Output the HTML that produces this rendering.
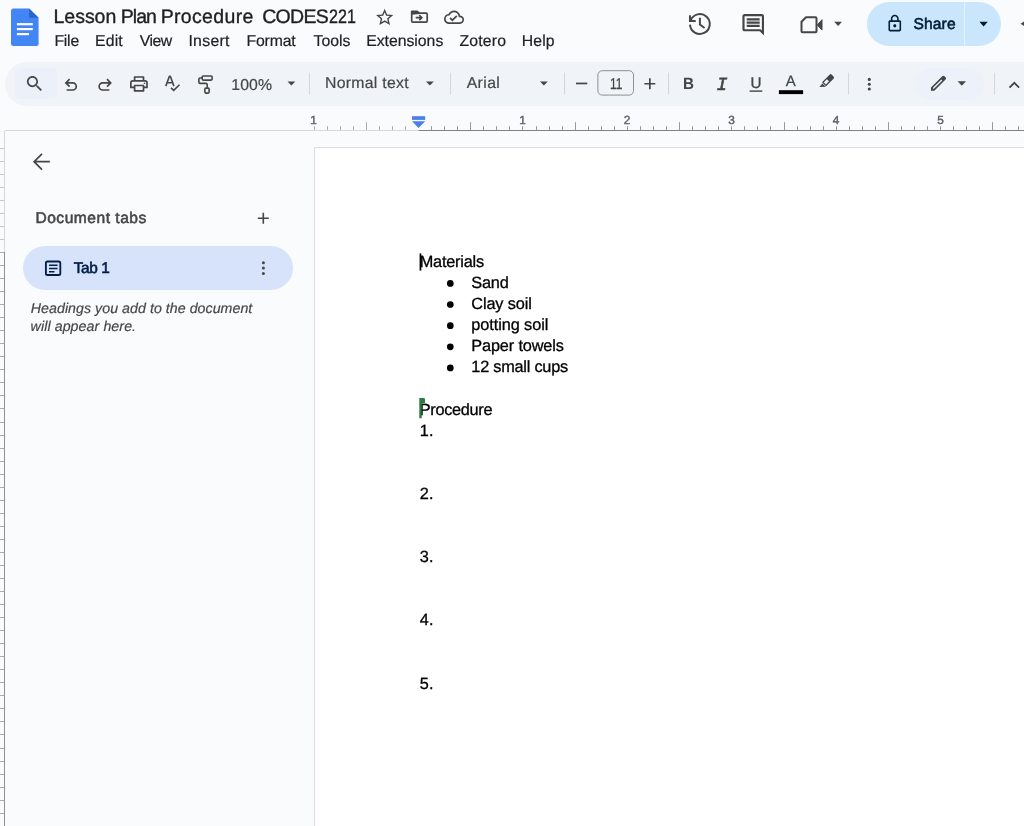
<!DOCTYPE html>
<html lang="en">
<head>
<meta charset="utf-8">
<title>Lesson Plan Procedure CODES221 - Google Docs</title>
<style>
html,body{margin:0;padding:0;}
body{width:1024px;height:826px;overflow:hidden;background:#f9fbfd;position:relative;font-family:"Liberation Sans",sans-serif;color:#444746;}
.abs{position:absolute;}
.t{position:absolute;white-space:nowrap;line-height:1;text-rendering:geometricPrecision;}
#toolbar{left:5px;top:62px;width:1040px;height:43.5px;border-radius:22px;background:#f0f4f9;}
#searchhl{left:15px;top:68px;width:42px;height:31px;background:#ecf1f9;border-radius:4px;}
#share{left:867px;top:2.100px;width:134.200px;height:43.700px;border-radius:22px;background:#c9e6fc;}
#sharesep{left:964px;top:2.100px;width:1px;height:43.700px;background:#e6f2fd;}
#editpill{left:915px;top:68px;width:69px;height:32px;border-radius:16px;background:#edf2fa;}
#page{left:314px;top:147px;width:720px;height:700px;background:#fff;border:1px solid #dadce0;box-sizing:border-box;}
#tabpill{left:23px;top:246px;width:270px;height:44px;border-radius:22px;background:#d7e3fa;}
</style>
</head>
<body>
<div id="toolbar" class="abs"></div>
<div id="searchhl" class="abs"></div>
<div id="share" class="abs"></div>
<div id="sharesep" class="abs"></div>
<div id="editpill" class="abs"></div>
<div id="page" class="abs"></div>
<div id="tabpill" class="abs"></div>
<div id="txt" class="abs" style="left:0;top:0;width:1024px;height:826px;will-change:transform;">
<!--TEXT-->
<div id="title" class="abs" style="left:0;top:0"><span class="t" style="left:53.47px;top:8.00px;font-size:19.5px;color:#1f1f1f;letter-spacing:-0.011px;-webkit-text-stroke:0.35px #1f1f1f;">Lesson</span> <span class="t" style="left:120.67px;top:8.00px;font-size:19.5px;color:#1f1f1f;letter-spacing:-0.926px;-webkit-text-stroke:0.35px #1f1f1f;">Plan</span> <span class="t" style="left:160.67px;top:8.00px;font-size:19.5px;color:#1f1f1f;letter-spacing:0.341px;-webkit-text-stroke:0.35px #1f1f1f;">Procedure</span> <span class="t" style="left:262.19px;top:8.00px;font-size:19.5px;color:#1f1f1f;letter-spacing:-0.667px;-webkit-text-stroke:0.35px #1f1f1f;">CODES</span><span class="t" style="left:328.68px;top:8.00px;font-size:19.5px;color:#1f1f1f;transform:scaleX(0.8271);transform-origin:0 0;-webkit-text-stroke:0.35px #1f1f1f;">221</span></div>
<div class="t" style="left:54.40px;top:34.00px;font-size:15.8px;color:#202124;letter-spacing:-0.214px;-webkit-text-stroke:0.2px #202124;">File</div>
<div class="t" style="left:95.10px;top:34.00px;font-size:15.8px;color:#202124;letter-spacing:0.146px;-webkit-text-stroke:0.2px #202124;">Edit</div>
<div class="t" style="left:139.70px;top:34.00px;font-size:15.8px;color:#202124;letter-spacing:-0.497px;-webkit-text-stroke:0.2px #202124;">View</div>
<div class="t" style="left:188.39px;top:34.00px;font-size:15.8px;color:#202124;letter-spacing:0.311px;-webkit-text-stroke:0.2px #202124;">Insert</div>
<div class="t" style="left:246.40px;top:34.00px;font-size:15.8px;color:#202124;letter-spacing:-0.132px;-webkit-text-stroke:0.2px #202124;">Format</div>
<div class="t" style="left:313.59px;top:34.00px;font-size:15.8px;color:#202124;letter-spacing:-0.022px;-webkit-text-stroke:0.2px #202124;">Tools</div>
<div class="t" style="left:366.20px;top:34.00px;font-size:15.8px;color:#202124;letter-spacing:-0.020px;-webkit-text-stroke:0.2px #202124;">Extensions</div>
<div class="t" style="left:459.56px;top:34.00px;font-size:15.8px;color:#202124;letter-spacing:0.157px;-webkit-text-stroke:0.2px #202124;">Zotero</div>
<div class="t" style="left:521.70px;top:34.00px;font-size:15.8px;color:#202124;letter-spacing:0.148px;-webkit-text-stroke:0.2px #202124;">Help</div>
<div class="t" style="left:913.45px;top:17.00px;font-size:15.6px;color:#001d35;letter-spacing:0.141px;-webkit-text-stroke:0.55px #001d35;">Share</div>
<div class="t" style="left:231.36px;top:78.00px;font-size:15.8px;color:#444746;letter-spacing:0.089px;-webkit-text-stroke:0.2px #444746;">100%</div>
<div class="t" style="left:325.00px;top:76.00px;font-size:15.8px;color:#444746;letter-spacing:0.292px;-webkit-text-stroke:0.2px #444746;">Normal text</div>
<div class="t" style="left:466.64px;top:76.00px;font-size:15.8px;color:#444746;letter-spacing:0.411px;-webkit-text-stroke:0.2px #444746;">Arial</div>
<div class="t" style="left:609.51px;top:77.00px;font-size:15.8px;color:#444746;transform:scaleX(0.7553);transform-origin:0 0;-webkit-text-stroke:0.3px #444746;">11</div>
<div class="t" style="left:35.45px;top:211.00px;font-size:15.6px;color:#444746;letter-spacing:0.499px;-webkit-text-stroke:0.55px #444746;">Document tabs</div>
<div class="t" style="left:73.82px;top:261.00px;font-size:15.4px;color:#041e49;letter-spacing:-0.427px;-webkit-text-stroke:0.6px #041e49;">Tab 1</div>
<div class="t" style="left:30.82px;top:302.00px;font-size:14.2px;color:#444746;letter-spacing:0.045px;font-style:italic;-webkit-text-stroke:0.2px #444746;">Headings you add to the document</div>
<div class="t" style="left:30.61px;top:320.00px;font-size:14.2px;color:#444746;letter-spacing:0.084px;font-style:italic;-webkit-text-stroke:0.2px #444746;">will appear here.</div>
<div class="t" style="left:419.70px;top:254.00px;font-size:16.3px;color:#000;letter-spacing:-0.207px;-webkit-text-stroke:0.3px #000;">Materials</div>
<div class="t" style="left:471.30px;top:275.00px;font-size:16.3px;color:#000;letter-spacing:-0.201px;-webkit-text-stroke:0.3px #000;">Sand</div>
<div class="t" style="left:471.30px;top:296.00px;font-size:16.3px;color:#000;letter-spacing:-0.120px;-webkit-text-stroke:0.3px #000;">Clay soil</div>
<div class="t" style="left:471.30px;top:317.00px;font-size:16.3px;color:#000;letter-spacing:-0.075px;-webkit-text-stroke:0.3px #000;">potting soil</div>
<div class="t" style="left:471.30px;top:338.00px;font-size:16.3px;color:#000;letter-spacing:-0.141px;-webkit-text-stroke:0.3px #000;">Paper towels</div>
<div class="t" style="left:471.30px;top:359.00px;font-size:16.3px;color:#000;letter-spacing:-0.226px;-webkit-text-stroke:0.3px #000;">12 small cups</div>
<div class="t" style="left:419.70px;top:402.00px;font-size:16.3px;color:#000;letter-spacing:-0.280px;-webkit-text-stroke:0.3px #000;">Procedure</div>
<div class="t" style="left:419.70px;top:423.00px;font-size:16.3px;color:#000;letter-spacing:0.200px;-webkit-text-stroke:0.3px #000;">1.</div>
<div class="t" style="left:419.70px;top:486.00px;font-size:16.3px;color:#000;letter-spacing:0.200px;-webkit-text-stroke:0.3px #000;">2.</div>
<div class="t" style="left:419.70px;top:549.00px;font-size:16.3px;color:#000;letter-spacing:0.200px;-webkit-text-stroke:0.3px #000;">3.</div>
<div class="t" style="left:419.70px;top:612.00px;font-size:16.3px;color:#000;letter-spacing:0.200px;-webkit-text-stroke:0.3px #000;">4.</div>
<div class="t" style="left:419.70px;top:676.00px;font-size:16.3px;color:#000;letter-spacing:0.200px;-webkit-text-stroke:0.3px #000;">5.</div>
<div class="t" style="left:310.30px;top:115.00px;font-size:11.8px;color:#5f6368;-webkit-text-stroke:0.45px #5f6368;">1</div>
<div class="t" style="left:519.20px;top:115.00px;font-size:11.8px;color:#5f6368;-webkit-text-stroke:0.45px #5f6368;">1</div>
<div class="t" style="left:623.63px;top:115.00px;font-size:11.8px;color:#5f6368;-webkit-text-stroke:0.45px #5f6368;">2</div>
<div class="t" style="left:728.13px;top:115.00px;font-size:11.8px;color:#5f6368;-webkit-text-stroke:0.45px #5f6368;">3</div>
<div class="t" style="left:832.63px;top:115.00px;font-size:11.8px;color:#5f6368;-webkit-text-stroke:0.45px #5f6368;">4</div>
<div class="t" style="left:937.14px;top:115.00px;font-size:11.8px;color:#5f6368;-webkit-text-stroke:0.45px #5f6368;">5</div>
<div class="t" style="left:682.69px;top:76.00px;font-size:16.2px;color:#444746;font-weight:700;transform:scaleX(0.9402);transform-origin:0 0;-webkit-text-stroke:0.01px #444746;">B</div>
<div class="t" style="left:716.53px;top:77.00px;font-size:18.4px;color:#444746;font-style:italic;font-family:'Liberation Mono',monospace;-webkit-text-stroke:0.6px #444746;">I</div>
<div class="t" style="left:750.58px;top:76.00px;font-size:15.2px;color:#444746;-webkit-text-stroke:0.35px #444746;">U</div>
<div class="t" style="left:785.81px;top:74.00px;font-size:15.0px;color:#444746;-webkit-text-stroke:0.25px #444746;">A</div>
<!--/TEXT-->
</div>
<!--SVG-->
<svg class="abs" style="left:0;top:0" width="1024" height="826" viewBox="0 0 1024 826">
<!-- docs logo -->
<g id="logo">
<path d="M13.5 8.4H29.1L38.6 17.7V43.4a2.5 2.5 0 0 1-2.5 2.5H13.5a2.5 2.5 0 0 1-2.5-2.5V10.9a2.5 2.5 0 0 1 2.500-2.500z" fill="#4285f4"/>
<path d="M29.1 8.400L38.600 17.700H29.100z" fill="#2b63d0"/>
<rect x="16.9" y="23.1" width="15.9" height="2.2" fill="#fff"/>
<rect x="16.9" y="28" width="15.9" height="2.2" fill="#fff"/>
<rect x="16.9" y="33" width="12" height="2.200" fill="#fff"/>
</g>
<!-- title icons -->
<g id="star" fill="#444746" transform="translate(374.300,6.950) scale(0.865)"><path d="M22 9.240l-7.190-.620L12 2 9.190 8.630 2 9.240l5.460 4.730L5.820 21 12 17.270 18.180 21l-1.630-7.030L22 9.240zM12 15.400l-3.760 2.270 1-4.280-3.320-2.880 4.380-.380L12 6.100l1.710 4.040 4.380.38-3.320 2.880 1 4.280L12 15.400z"/></g>
<g id="folder" fill="none" stroke="#444746" stroke-width="1.7" stroke-linejoin="round">
<rect x="411.700" y="13.100" width="15.500" height="9" rx="1.200"/>
<path d="M411.700 14V11.300H417.300L419.300 13.100z" fill="#444746"/>
<path d="M415.700 17.650h5.600M419.300 15.150l2.500 2.500-2.500 2.500" stroke-width="1.700" stroke-linejoin="miter"/>
</g>
<g id="cloud" fill="#444746" transform="translate(444,7.200) scale(0.835)"><path d="M19.350 10.040C18.670 6.590 15.640 4 12 4 9.110 4 6.600 5.640 5.350 8.040 2.340 8.360 0 10.910 0 14c0 3.310 2.690 6 6 6h13c2.760 0 5-2.240 5-5 0-2.640-2.050-4.780-4.650-4.960zM19 18H6c-2.210 0-4-1.790-4-4 0-2.050 1.530-3.760 3.560-3.970l1.070-.11.500-.95C8.080 7.140 9.940 6 12 6c2.620 0 4.880 1.860 5.390 4.430l.3 1.500 1.530.11c1.560.1 2.780 1.410 2.780 2.960 0 1.650-1.350 3-3 3zm-9-3.820l-2.090-2.090L6.500 13.500 10 17l6.010-6.010-1.410-1.410z"/></g>
<!-- right header icons -->
<g id="history" fill="none" stroke="#444746" stroke-width="1.95"><path d="M690 24.600A9.900 9.900 0 1 0 690.600 20.600"/><path d="M689.950 15.300V20.950H695.700"/><path d="M699.900 17.700V24.600L704.600 28" stroke-linejoin="miter"/></g>
<g id="comment" fill="#444746" transform="translate(740.250,11.850) scale(1.080)"><path d="M21.990 4c0-1.100-.89-2-1.990-2H4c-1.100 0-2 .900-2 2v12c0 1.100.9 2 2 2h14l4 4-.01-18zM20 4v13.170L18.830 16H4V4h16zM6 12h12v2H6zm0-3h12v2H6zm0-3h12v2H6z"/></g>
<g id="video" fill="none" stroke="#444746" stroke-width="2" stroke-linejoin="round">
<path d="M806.000 17.300h9.500a1 1 0 0 1 1 1v13a1 1 0 0 1-1 1h-13a1 1 0 0 1-1-1v-9.500z"/>
<path d="M817.300 24.900l4.700-5.200v10.400z" fill="#444746" stroke-width="1"/>
</g>
<path d="M834.200 21.800h7.800l-3.900 4.200z" fill="#444746"/>
<!-- share -->
<g id="lock" fill="#001d35" transform="translate(885.300,14.000) scale(0.790)"><path d="M18 8h-1V6c0-2.760-2.240-5-5-5S7 3.240 7 6v2H6c-1.100 0-2 .9-2 2v10c0 1.100.9 2 2 2h12c1.100 0 2-.9 2-2V10c0-1.100-.9-2-2-2zM9 6c0-1.660 1.340-3 3-3s3 1.340 3 3v2H9V6zm9 14H6V10h12v10zm-6-3c1.100 0 2-.9 2-2s-.9-2-2-2-2 .9-2 2 .9 2 2 2z"/></g>
<path d="M979.400 21.800h8.400l-4.200 4.800z" fill="#001d35"/>
<path d="M1024 21.600l-3.400 2.200 3.400 2.200z" fill="#444746"/>
<!--TOOLBAR-->
<g fill="#444746" transform="translate(24.3,73.4) scale(0.858)"><path d="M15.500 14h-.790l-.280-.270C15.410 12.590 16 11.110 16 9.500 16 5.910 13.090 3 9.500 3S3 5.910 3 9.500 5.910 16 9.500 16c1.610 0 3.090-.590 4.230-1.570l.270.280v.790l5 4.990L20.490 19l-4.990-5zm-6 0C7.010 14 5 11.990 5 9.500S7.010 5 9.500 5 14 7.010 14 9.500 11.990 14 9.500 14z"/></g>
<g fill="none" stroke="#444746" stroke-width="1.7" stroke-linejoin="miter"><path d="M66.300 82.900H72.700a3.550 3.550 0 0 1 0 7.100H66.600M69.600 79.200L65.900 82.900L69.600 86.600"/><path d="M110.300 82.900H102.700a3.550 3.550 0 0 0 0 7.100H109.400M107 79.200L110.700 82.900L107 86.600"/></g>
<g fill="none" stroke="#444746" stroke-width="1.7" stroke-linejoin="round"><path d="M134.600 80.300V77H143.500V80.300"/><path d="M134.600 87.400H130.850V82.800a2 2 0 0 1 2-2H145a2 2 0 0 1 2 2V87.400H143.500"/><rect x="134.600" y="85.500" width="8.900" height="5.400"/></g><circle cx="144.500" cy="83.300" r="0.800" fill="#444746"/>
<g fill="none" stroke="#444746" stroke-width="1.600"><path d="M165.800 86.100L169.400 76.300H170.300L173.900 86.100M167.200 82.700H172.500" stroke-linejoin="bevel"/><path d="M171 87.800L173.700 90.400L179.500 84.700"/></g>
<g fill="none" stroke="#444746" stroke-width="1.600" stroke-linejoin="round"><rect x="202.200" y="76" width="9.900" height="4.100" rx="1"/><path d="M202.200 78H200a1.100 1.100 0 0 0-1.100 1.100V82.300a1.100 1.100 0 0 0 1.100 1.100H206.100a1.100 1.100 0 0 1 1.100 1.100V87.800"/><rect x="204.900" y="88.100" width="4.200" height="5" rx="1"/></g>
<path d="M287.5 81.600h7.800l-3.900 3.900z" fill="#444746"/>
<path d="M426 81.600h7.800l-3.900 3.900z" fill="#444746"/>
<path d="M540 81.600h7.800l-3.900 3.900z" fill="#444746"/>
<rect x="309" y="72.700" width="1" height="21.800" fill="#d3d6da"/>
<rect x="450" y="72.700" width="1" height="21.800" fill="#d3d6da"/>
<rect x="564" y="72.700" width="1" height="21.800" fill="#d3d6da"/>
<rect x="668" y="72.700" width="1" height="21.800" fill="#d3d6da"/>
<rect x="848" y="72.700" width="1" height="21.800" fill="#d3d6da"/>
<rect x="994" y="72.700" width="1" height="21.800" fill="#d3d6da"/>
<rect x="576" y="82.600" width="11.300" height="1.700" fill="#444746"/>
<rect x="597.900" y="70.700" width="35.600" height="24.400" rx="4.300" fill="none" stroke="#8c9196" stroke-width="1"/>
<path d="M644.400 82.900h10.900v1.700h-10.900zM649 78.300h1.700v10.900h-1.700z" fill="#444746"/>
<rect x="749.600" y="90.400" width="12.700" height="1.400" fill="#444746"/>
<rect x="778.900" y="90.200" width="24.200" height="3.900" fill="#000"/>
<g transform="translate(828.300,79.900) rotate(45)" fill="#444746"><path fill-rule="evenodd" d="M-2.850 -4.550a1.600 1.600 0 0 1 1.600-1.600h2.500a1.600 1.600 0 0 1 1.600 1.600V5.350a0.800 0.800 0 0 1-0.800 0.800h-4.100a0.800 0.800 0 0 1-0.800-0.800zM-1.450 0.500V4.900H1.450V0.500z"/></g><path d="M819.400 87.100L825.900 86.700L822.300 83.600z" fill="#444746"/>
<circle cx="869.300" cy="79.4" r="1.550" fill="#444746"/>
<circle cx="869.300" cy="84.2" r="1.550" fill="#444746"/>
<circle cx="869.300" cy="89" r="1.550" fill="#444746"/>
<g transform="translate(938,83.800) rotate(45)" fill="#444746"><path fill-rule="evenodd" d="M-2.350 -8.350a1.600 1.600 0 0 1 1.600-1.600h1.500a1.600 1.600 0 0 1 1.600 1.600V7.600L0 9.950L-2.350 7.600zM-0.650 -5.450H0.650V6.400L0 7.050L-0.650 6.400z"/></g>
<path d="M957.600 81.300h8.400l-4.200 4.500z" fill="#444746"/>
<path d="M1009.500 87.700L1014.300 82.800L1019.100 87.700" fill="none" stroke="#444746" stroke-width="1.800"/>
<!--/TOOLBAR-->
<!--RULER-->
<rect x="5" y="130" width="414" height="1" fill="#d5d7da"/>
<rect x="418.600" y="130" width="606" height="1" fill="#808386"/>
<rect x="314" y="126.2" width="1" height="3.8" fill="#a9acaf"/>
<rect x="327" y="126.2" width="1" height="3.8" fill="#a9acaf"/>
<rect x="340" y="126.2" width="1" height="3.8" fill="#a9acaf"/>
<rect x="353" y="126.2" width="1" height="3.8" fill="#a9acaf"/>
<rect x="366" y="122.2" width="1" height="7.8" fill="#a9acaf"/>
<rect x="379" y="126.2" width="1" height="3.8" fill="#a9acaf"/>
<rect x="392" y="126.2" width="1" height="3.8" fill="#a9acaf"/>
<rect x="405" y="126.2" width="1" height="3.8" fill="#a9acaf"/>
<rect x="431" y="126.2" width="1" height="3.8" fill="#96999c"/>
<rect x="444" y="126.2" width="1" height="3.8" fill="#96999c"/>
<rect x="457" y="126.2" width="1" height="3.8" fill="#96999c"/>
<rect x="470" y="122.2" width="1" height="7.8" fill="#96999c"/>
<rect x="483" y="126.2" width="1" height="3.8" fill="#96999c"/>
<rect x="496" y="126.2" width="1" height="3.8" fill="#96999c"/>
<rect x="509" y="126.2" width="1" height="3.8" fill="#96999c"/>
<rect x="522" y="126.2" width="1" height="3.8" fill="#96999c"/>
<rect x="536" y="126.2" width="1" height="3.8" fill="#96999c"/>
<rect x="549" y="126.2" width="1" height="3.8" fill="#96999c"/>
<rect x="562" y="126.2" width="1" height="3.8" fill="#96999c"/>
<rect x="575" y="122.2" width="1" height="7.8" fill="#96999c"/>
<rect x="588" y="126.2" width="1" height="3.8" fill="#96999c"/>
<rect x="601" y="126.2" width="1" height="3.8" fill="#96999c"/>
<rect x="614" y="126.2" width="1" height="3.8" fill="#96999c"/>
<rect x="627" y="126.2" width="1" height="3.8" fill="#96999c"/>
<rect x="640" y="126.2" width="1" height="3.8" fill="#96999c"/>
<rect x="653" y="126.2" width="1" height="3.8" fill="#96999c"/>
<rect x="666" y="126.2" width="1" height="3.8" fill="#96999c"/>
<rect x="679" y="122.2" width="1" height="7.8" fill="#96999c"/>
<rect x="692" y="126.2" width="1" height="3.8" fill="#96999c"/>
<rect x="705" y="126.2" width="1" height="3.8" fill="#96999c"/>
<rect x="718" y="126.2" width="1" height="3.8" fill="#96999c"/>
<rect x="731" y="126.2" width="1" height="3.8" fill="#96999c"/>
<rect x="744" y="126.2" width="1" height="3.8" fill="#96999c"/>
<rect x="757" y="126.2" width="1" height="3.8" fill="#96999c"/>
<rect x="770" y="126.2" width="1" height="3.8" fill="#96999c"/>
<rect x="784" y="122.2" width="1" height="7.8" fill="#96999c"/>
<rect x="797" y="126.2" width="1" height="3.8" fill="#96999c"/>
<rect x="810" y="126.2" width="1" height="3.8" fill="#96999c"/>
<rect x="823" y="126.2" width="1" height="3.8" fill="#96999c"/>
<rect x="836" y="126.2" width="1" height="3.8" fill="#96999c"/>
<rect x="849" y="126.2" width="1" height="3.8" fill="#96999c"/>
<rect x="862" y="126.2" width="1" height="3.8" fill="#96999c"/>
<rect x="875" y="126.2" width="1" height="3.8" fill="#96999c"/>
<rect x="888" y="122.2" width="1" height="7.8" fill="#96999c"/>
<rect x="901" y="126.2" width="1" height="3.8" fill="#96999c"/>
<rect x="914" y="126.2" width="1" height="3.8" fill="#96999c"/>
<rect x="927" y="126.2" width="1" height="3.8" fill="#96999c"/>
<rect x="940" y="126.2" width="1" height="3.8" fill="#96999c"/>
<rect x="953" y="126.2" width="1" height="3.8" fill="#96999c"/>
<rect x="966" y="126.2" width="1" height="3.8" fill="#96999c"/>
<rect x="979" y="126.2" width="1" height="3.8" fill="#96999c"/>
<rect x="992" y="122.2" width="1" height="7.8" fill="#96999c"/>
<rect x="1005" y="126.2" width="1" height="3.8" fill="#96999c"/>
<rect x="1018" y="126.2" width="1" height="3.8" fill="#96999c"/>
<rect x="412" y="116.200" width="13.200" height="3.700" fill="#4b7fe9"/><path d="M412 121.200h13.200l-6.600 6.800z" fill="#4b7fe9"/>
<rect x="4" y="131" width="1" height="121" fill="#d5d7da"/>
<rect x="4" y="252" width="1" height="580" fill="#8f9295"/>
<rect x="0" y="148" width="4" height="1" fill="#c4c7ca"/>
<rect x="0" y="161" width="4" height="1" fill="#c4c7ca"/>
<rect x="0" y="174" width="4" height="1" fill="#c4c7ca"/>
<rect x="0" y="187" width="4" height="1" fill="#c4c7ca"/>
<rect x="0" y="200" width="4" height="1" fill="#c4c7ca"/>
<rect x="0" y="213" width="4" height="1" fill="#c4c7ca"/>
<rect x="0" y="226" width="4" height="1" fill="#c4c7ca"/>
<rect x="0" y="239" width="4" height="1" fill="#c4c7ca"/>
<rect x="0" y="252" width="4" height="1" fill="#a9acaf"/>
<rect x="0" y="265" width="4" height="1" fill="#a9acaf"/>
<rect x="0" y="278" width="4" height="1" fill="#a9acaf"/>
<rect x="0" y="291" width="4" height="1" fill="#a9acaf"/>
<rect x="0" y="304" width="4" height="1" fill="#a9acaf"/>
<rect x="0" y="317" width="4" height="1" fill="#a9acaf"/>
<rect x="0" y="330" width="4" height="1" fill="#a9acaf"/>
<rect x="0" y="343" width="4" height="1" fill="#a9acaf"/>
<rect x="0" y="356" width="4" height="1" fill="#a9acaf"/>
<rect x="0" y="369" width="4" height="1" fill="#a9acaf"/>
<rect x="0" y="382" width="4" height="1" fill="#a9acaf"/>
<rect x="0" y="395" width="4" height="1" fill="#a9acaf"/>
<rect x="0" y="408" width="4" height="1" fill="#a9acaf"/>
<rect x="0" y="422" width="4" height="1" fill="#a9acaf"/>
<rect x="0" y="435" width="4" height="1" fill="#a9acaf"/>
<rect x="0" y="448" width="4" height="1" fill="#a9acaf"/>
<rect x="0" y="461" width="4" height="1" fill="#a9acaf"/>
<rect x="0" y="474" width="4" height="1" fill="#a9acaf"/>
<rect x="0" y="487" width="4" height="1" fill="#a9acaf"/>
<rect x="0" y="500" width="4" height="1" fill="#a9acaf"/>
<rect x="0" y="513" width="4" height="1" fill="#a9acaf"/>
<rect x="0" y="526" width="4" height="1" fill="#a9acaf"/>
<rect x="0" y="539" width="4" height="1" fill="#a9acaf"/>
<rect x="0" y="552" width="4" height="1" fill="#a9acaf"/>
<rect x="0" y="565" width="4" height="1" fill="#a9acaf"/>
<rect x="0" y="578" width="4" height="1" fill="#a9acaf"/>
<rect x="0" y="591" width="4" height="1" fill="#a9acaf"/>
<rect x="0" y="604" width="4" height="1" fill="#a9acaf"/>
<rect x="0" y="617" width="4" height="1" fill="#a9acaf"/>
<rect x="0" y="630" width="4" height="1" fill="#a9acaf"/>
<rect x="0" y="643" width="4" height="1" fill="#a9acaf"/>
<rect x="0" y="656" width="4" height="1" fill="#a9acaf"/>
<rect x="0" y="669" width="4" height="1" fill="#a9acaf"/>
<rect x="0" y="682" width="4" height="1" fill="#a9acaf"/>
<rect x="0" y="695" width="4" height="1" fill="#a9acaf"/>
<rect x="0" y="708" width="4" height="1" fill="#a9acaf"/>
<rect x="0" y="721" width="4" height="1" fill="#a9acaf"/>
<rect x="0" y="734" width="4" height="1" fill="#a9acaf"/>
<rect x="0" y="748" width="4" height="1" fill="#a9acaf"/>
<rect x="0" y="761" width="4" height="1" fill="#a9acaf"/>
<rect x="0" y="774" width="4" height="1" fill="#a9acaf"/>
<rect x="0" y="787" width="4" height="1" fill="#a9acaf"/>
<rect x="0" y="800" width="4" height="1" fill="#a9acaf"/>
<rect x="0" y="813" width="4" height="1" fill="#a9acaf"/>
<rect x="0" y="826" width="4" height="1" fill="#a9acaf"/>
<!--/RULER-->
<!--SIDEBAR-->
<path d="M49.900 161.700H34.200M42 153.900L34.100 161.700L42 169.600" fill="none" stroke="#444746" stroke-width="1.700"/>
<path d="M257.800 217.500h11v1.600h-11zM262.500 212.800h1.600v11h-1.600z" fill="#444746"/>
<g fill="none" stroke="#041e49"><rect x="45.900" y="261.500" width="14.400" height="13.500" rx="1.600" stroke-width="1.850"/><path d="M49 265.200H57.600M49 268.400H57.600M49 271.700H54.500" stroke-width="1.500"/></g>
<circle cx="263.400" cy="262.7" r="1.500" fill="#444746"/>
<circle cx="263.400" cy="268.1" r="1.500" fill="#444746"/>
<circle cx="263.400" cy="273.4" r="1.500" fill="#444746"/>
<!--/SIDEBAR-->
<!--DOC-->
<rect x="419.600" y="253.400" width="1.700" height="17.200" fill="#000"/>
<circle cx="450.300" cy="283.4" r="3.350" fill="#000"/>
<circle cx="450.300" cy="304.5" r="3.350" fill="#000"/>
<circle cx="450.300" cy="325.7" r="3.350" fill="#000"/>
<circle cx="450.300" cy="346.8" r="3.350" fill="#000"/>
<circle cx="450.300" cy="367.9" r="3.350" fill="#000"/>
<path d="M419.300 398h4.300a1.400 1.400 0 0 1 1.400 1.400v3.600h-3.300v15.300h-2.400z" fill="#2a7d3f"/>
<!--/DOC-->
</svg>
<!--/SVG-->
</body>
</html>
